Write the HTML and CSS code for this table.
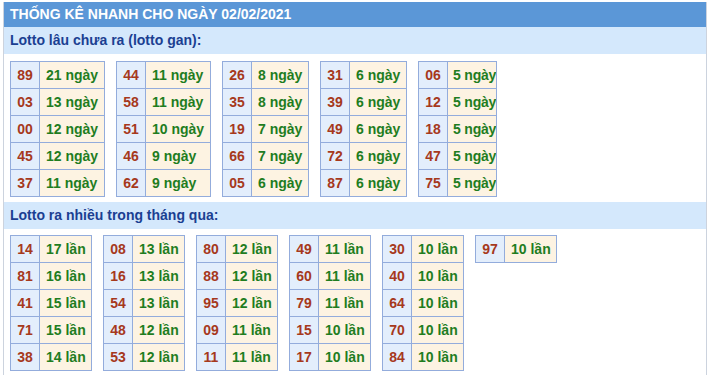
FILE: index.html
```html
<!DOCTYPE html>
<html lang="vi">
<head>
<meta charset="utf-8">
<title>Thống kê nhanh</title>
<link rel="stylesheet" href="styles.css">
</head>
<body>
<div class="box">
  <div class="head">THỐNG KÊ NHANH CHO NGÀY 02/02/2021</div>
  <div class="sub">Lotto lâu chưa ra (lotto gan):</div>
  <div class="tables sec1">
    <div class="tbl w95">
      <span class="n">89</span><span class="v">21 ngày</span>
      <span class="n">03</span><span class="v">13 ngày</span>
      <span class="n">00</span><span class="v">12 ngày</span>
      <span class="n">45</span><span class="v">12 ngày</span>
      <span class="n">37</span><span class="v">11 ngày</span>
    </div>
    <div class="tbl w95">
      <span class="n">44</span><span class="v">11 ngày</span>
      <span class="n">58</span><span class="v">11 ngày</span>
      <span class="n">51</span><span class="v">10 ngày</span>
      <span class="n">46</span><span class="v">9 ngày</span>
      <span class="n">62</span><span class="v">9 ngày</span>
    </div>
    <div class="tbl w87">
      <span class="n">26</span><span class="v">8 ngày</span>
      <span class="n">35</span><span class="v">8 ngày</span>
      <span class="n">19</span><span class="v">7 ngày</span>
      <span class="n">66</span><span class="v">7 ngày</span>
      <span class="n">05</span><span class="v">6 ngày</span>
    </div>
    <div class="tbl w87">
      <span class="n">31</span><span class="v">6 ngày</span>
      <span class="n">39</span><span class="v">6 ngày</span>
      <span class="n">49</span><span class="v">6 ngày</span>
      <span class="n">72</span><span class="v">6 ngày</span>
      <span class="n">87</span><span class="v">6 ngày</span>
    </div>
    <div class="tbl w79">
      <span class="n">06</span><span class="v">5 ngày</span>
      <span class="n">12</span><span class="v">5 ngày</span>
      <span class="n">18</span><span class="v">5 ngày</span>
      <span class="n">47</span><span class="v">5 ngày</span>
      <span class="n">75</span><span class="v">5 ngày</span>
    </div>
  </div>
  <div class="sub">Lotto ra nhiều trong tháng qua:</div>
  <div class="tables sec2">
    <div class="tbl w82">
      <span class="n">14</span><span class="v">17 lần</span>
      <span class="n">81</span><span class="v">16 lần</span>
      <span class="n">41</span><span class="v">15 lần</span>
      <span class="n">71</span><span class="v">15 lần</span>
      <span class="n">38</span><span class="v">14 lần</span>
    </div>
    <div class="tbl w82">
      <span class="n">08</span><span class="v">13 lần</span>
      <span class="n">16</span><span class="v">13 lần</span>
      <span class="n">54</span><span class="v">13 lần</span>
      <span class="n">48</span><span class="v">12 lần</span>
      <span class="n">53</span><span class="v">12 lần</span>
    </div>
    <div class="tbl w82">
      <span class="n">80</span><span class="v">12 lần</span>
      <span class="n">88</span><span class="v">12 lần</span>
      <span class="n">95</span><span class="v">12 lần</span>
      <span class="n">09</span><span class="v">11 lần</span>
      <span class="n">11</span><span class="v">11 lần</span>
    </div>
    <div class="tbl w82">
      <span class="n">49</span><span class="v">11 lần</span>
      <span class="n">60</span><span class="v">11 lần</span>
      <span class="n">79</span><span class="v">11 lần</span>
      <span class="n">15</span><span class="v">10 lần</span>
      <span class="n">17</span><span class="v">10 lần</span>
    </div>
    <div class="tbl w82">
      <span class="n">30</span><span class="v">10 lần</span>
      <span class="n">40</span><span class="v">10 lần</span>
      <span class="n">64</span><span class="v">10 lần</span>
      <span class="n">70</span><span class="v">10 lần</span>
      <span class="n">84</span><span class="v">10 lần</span>
    </div>
    <div class="tbl w82">
      <span class="n">97</span><span class="v">10 lần</span>
    </div>
  </div>
</div>
</body>
</html>
```
FILE: styles.css
```css
html, body {
  margin: 0;
  padding: 0;
  background: #ffffff;
}
body {
  font-family: "Liberation Sans", Arial, sans-serif;
  font-weight: bold;
  font-size: 14px;
}
.box {
  margin: 2px 0 0 3px;
  width: 704px;
  min-height: 373px;
  box-sizing: border-box;
  border-left: 1px solid #ccd3de;
  border-right: 1px solid #ccd3de;
}
.head {
  height: 25px;
  line-height: 25px;
  background: #5b97d7;
  color: #ffffff;
  padding-left: 6px;
}
.sub {
  height: 27px;
  line-height: 27px;
  background: #d4e8fc;
  color: #1b3f92;
  padding-left: 6px;
}
.tables {
  display: flex;
  align-items: flex-start;
  gap: 11px;
  padding-left: 6px;
}
.sec1 {
  padding-top: 7px;
  padding-bottom: 5px;
}
.sec2 {
  padding-top: 6px;
}
.tbl {
  display: grid;
  grid-template-columns: 28px minmax(0, 1fr);
  grid-auto-rows: 26px;
  gap: 1px;
  padding: 1px;
  background: #93acdc;
  box-sizing: border-box;
  flex: none;
}
.w95 { width: 95px; }
.w87 { width: 87px; }
.w79 { width: 79px; }
.w82 { width: 82px; }
.n, .v {
  line-height: 26px;
  white-space: nowrap;
  overflow: hidden;
}
.n {
  background: #e3eefc;
  color: #a6391c;
  text-align: center;
}
.v {
  background: #fdf3e2;
  color: #1f7d1f;
  padding-left: 6px;
}
.w79 .v {
  padding-left: 5px;
  letter-spacing: -0.2px;
}
```
